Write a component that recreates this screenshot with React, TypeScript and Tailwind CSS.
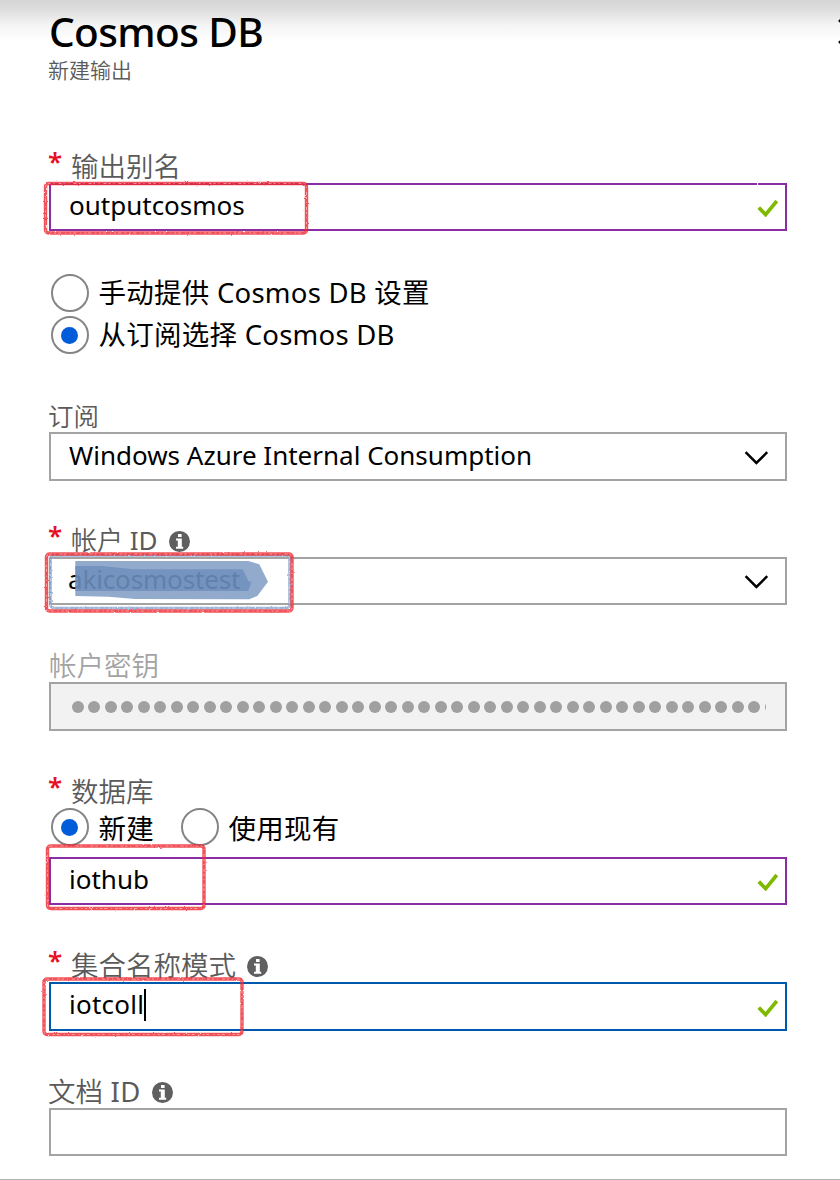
import type { ReactNode } from "react";

function Info() {
  return (
    <svg className="mt-px ml-[11px] size-[21px]" viewBox="0 0 21 21">
      <circle cx="10.5" cy="10.5" r="10.5" fill="#5f5f5f" />
      <rect x="9" y="3" width="3.6" height="3" fill="#fff" />
      <path d="M7 7.6h5.8v8.2h1.4v2H7v-2h1.8V9.4H7z" fill="#fff" />
    </svg>
  );
}

function Check() {
  return (
    <svg className="mt-0.5 ml-auto mr-[6px] h-[18px] w-[22px]" viewBox="0 0 22 18" fill="none">
      <path d="M1.8 8.6 8.6 15.6 19.8 2" stroke="#7fba00" strokeWidth="3.7" />
    </svg>
  );
}

function Chevron() {
  return (
    <svg className="mt-0.5 ml-auto mr-[16px] h-[14px] w-[26px]" viewBox="0 0 26 14" fill="none">
      <path d="M2.6 1.2 13.4 12 24.2 1.2" stroke="#000" strokeWidth="2.5" />
    </svg>
  );
}

function Label({ children, required, muted, info, className = "" }: { children: ReactNode; required?: boolean; muted?: boolean; info?: boolean; className?: string }) {
  return (
    <div className={`flex h-9 items-center pt-[3px] font-[350] ${muted ? "text-[#a3a3a3]" : "text-[#5a5a5a]"} ${className}`}>
      {required && <span className="-ml-px w-[23px] shrink-0 pb-[11px] text-[26px] font-semibold text-[#e81123]">*</span>}
      <span className="whitespace-pre">{children}</span>
      {info && <Info />}
    </div>
  );
}

function Box({ children, icon, className }: { children?: ReactNode; icon?: ReactNode; className: string }) {
  return (
    <div className={`flex w-[738px] items-center border-2 bg-white pl-[18px] text-[26px] ${className}`}>
      <span className="flex pb-[4px] whitespace-pre">{children}</span>
      {icon}
    </div>
  );
}

function Radio({ checked, children, className = "" }: { checked?: boolean; children: ReactNode; className?: string }) {
  return (
    <div className={`flex items-center font-[370] tracking-[0.25px] ${className}`}>
      <span className="mr-[9.5px] ml-[2px] flex size-[38px] items-center justify-center rounded-full border-2 border-[#858585] bg-white">
        {checked && <span className="mr-px size-[17px] rounded-full bg-[#015cda]" />}
      </span>
      <span className="pb-px whitespace-pre">{children}</span>
    </div>
  );
}

function Sketch({ x, y, w, h, color = "#ee2530", width = 3.4 }: { x: number; y: number; w: number; h: number; color?: string; width?: number }) {
  return (
    <g fill="none" filter="url(#rough)">
      <rect x={x} y={y} width={w} height={h} rx="3" stroke={color} strokeWidth={width} strokeOpacity="0.8" />
      <rect x={x} y={y} width={w} height={h} rx="3" stroke="#fff" strokeOpacity="0.45" strokeWidth="1" strokeDasharray="2 3 1 4 3 2" />
    </g>
  );
}

export default function App() {
  return (
    <div className="relative flex h-[1180px] w-[840px] flex-col overflow-hidden border-b border-[#b3b3b3] bg-white bg-[linear-gradient(to_bottom,#d5d5d5_0px,#dcdcdc_9px,#f4f4f4_25px,#ffffff_41px)] pl-[49px] font-['Noto_Sans','Noto_Sans_CJK_SC',sans-serif] text-[27.5px] leading-9 text-black">
      <header className="flex h-[147px] flex-col">
        <h1 className="mt-[7px] h-[49px] text-[40.5px] leading-[50px] font-[480] tracking-[-0.6px] whitespace-pre">Cosmos DB</h1>
        <p className="-ml-px h-[28px] text-[21px] leading-[28px] font-[350] text-[#5a5a5a]">新建输出</p>
      </header>
      <svg className="absolute top-[19px] left-[838px] size-[26px]" viewBox="0 0 26 26" fill="none">
        <path d="M1 1 24 24M24 1 1 24" stroke="#000" strokeWidth="2.5" />
      </svg>

      <Label required>输出别名</Label>
      <div className="relative">
        <Box className="h-12 border-[#8a2da5]" icon={<Check />}>outputcosmos</Box>
        <span className="absolute top-0 left-[708px] h-0.5 w-px bg-white" />
      </div>

      <div className="mt-[41px] flex h-[124px] flex-col">
        <Radio className="h-[42px]">手动提供 Cosmos DB 设置</Radio>
        <Radio className="h-[42px]" checked>从订阅选择 Cosmos DB</Radio>
      </div>

      <Label className="-ml-px text-[25.5px]">订阅</Label>
      <Box className="h-[49px] border-[#a3a3a3]" icon={<Chevron />}>Windows Azure Internal Consumption</Box>

      <div className="mt-10">
        <Label required info className="text-[26px]"><span className="relative -top-px">帐户<span className="font-[380]"> ID</span></span></Label>
        <Box className="h-12 border-[#a3a3a3]" icon={<Chevron />}><span className="-ml-px tracking-[-0.15px]">akicosmostest</span></Box>
      </div>

      <div className="mt-[41px]">
        <Label muted>帐户密钥</Label>
        <div className="flex h-[49px] w-[738px] items-center border-2 border-[#a3a3a3] bg-[#f2f2f2] pl-[20.6px]">
          <div className="flex w-[694.2px] gap-[4.51px] overflow-hidden">
            {Array.from({ length: 43 }, (_, i) => (
              <span key={i} className="size-3 shrink-0 rounded-full bg-[#a0a0a0]" />
            ))}
          </div>
        </div>
      </div>

      <div className="mt-[41px]">
        <Label required>数据库</Label>
        <div className="flex h-[49px]">
          <Radio className="h-[38px]" checked><span className="relative top-[2px]">新建</span></Radio>
          <Radio className="ml-[25px] h-[38px]"><span className="relative top-[2px]">使用现有</span></Radio>
        </div>
        <Box className="h-12 border-[#8a2da5]" icon={<Check />}><span className="pb-px">iothub</span></Box>
      </div>

      <div className="mt-[41px]">
        <Label required info>集合名称模式</Label>
        <Box className="h-[49px] border-[#0058ad]" icon={<Check />}>
          <span className="-mt-px tracking-[0.25px]">iotcoll</span>
          <span className="mt-[2px] h-8 w-0.5 bg-black" />
        </Box>
      </div>

      <div className="mt-[41px]">
        <Label info className="-ml-px">文档<span className="tracking-[0.4px] font-[380]"> ID</span></Label>
        <Box className="h-12 border-[#a3a3a3]" />
      </div>

      <svg className="pointer-events-none absolute top-0 left-0 h-[1180px] w-[840px]" viewBox="0 0 840 1180">
        <defs>
          <filter id="rough" filterUnits="userSpaceOnUse" x="0" y="0" width="840" height="1180">
            <feTurbulence type="fractalNoise" baseFrequency="0.35" numOctaves="2" seed="4" />
            <feDisplacementMap in="SourceGraphic" scale="2" xChannelSelector="R" yChannelSelector="G" />
          </filter>
        </defs>
        <g fill="#688bba" fillOpacity="0.72">
          <path d="M75.3 561H248.3L259.3 564.3 268 581.7 257.3 596 249.3 599.3 135.3 599 108.3 596.7 75.3 596z" />
          <path d="M75.3 566H101.7L133.3 569.3H242.7L249 582 251.7 581 248.3 591H75.3z" />
        </g>
        <Sketch x={45.5} y={183.5} w={261} h={49.5} />
        <Sketch x={50.5} y={555.5} w={239} h={52.5} color="#7f9fca" width={2.5} />
        <Sketch x={46.5} y={554} w={245.5} h={57} />
        <Sketch x={47.5} y={846} w={156.5} h={62.5} />
        <Sketch x={44} y={979} w={198} h={55.5} />
      </svg>
    </div>
  );
}
